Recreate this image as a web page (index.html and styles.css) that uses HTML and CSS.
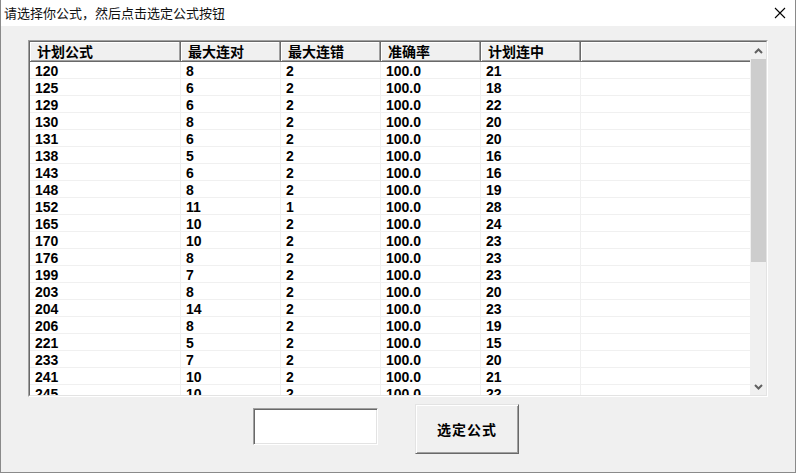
FILE: index.html
```html
<!DOCTYPE html>
<html>
<head>
<meta charset="utf-8">
<link rel="stylesheet" href="styles.css">
</head>
<body>
<div class="window">
  <div class="titlebar">
    <span class="title">请选择你公式，然后点击选定公式按钮</span>
    <span class="close"><svg width="12" height="12" viewBox="0 0 12 12"><path d="M1 1 L11 11 M11 1 L1 11" stroke="#000" stroke-width="1.1" fill="none"/></svg></span>
  </div>
  <div class="client">
    <div class="listbox">
      <div class="listinner">
        <div class="grid">
          <div class="header">
            <div class="hcell c1">计划公式</div>
            <div class="hcell c2">最大连对</div>
            <div class="hcell c2">最大连错</div>
            <div class="hcell c2">准确率</div>
            <div class="hcell c2">计划连中</div>
            <div class="hcell c6"></div>
          </div>
          <div class="rows">
            <div class="row"><div class="cell c1">120</div><div class="cell c2">8</div><div class="cell c2">2</div><div class="cell c2">100.0</div><div class="cell c2">21</div><div class="cell c6"></div></div>
            <div class="row"><div class="cell c1">125</div><div class="cell c2">6</div><div class="cell c2">2</div><div class="cell c2">100.0</div><div class="cell c2">18</div><div class="cell c6"></div></div>
            <div class="row"><div class="cell c1">129</div><div class="cell c2">6</div><div class="cell c2">2</div><div class="cell c2">100.0</div><div class="cell c2">22</div><div class="cell c6"></div></div>
            <div class="row"><div class="cell c1">130</div><div class="cell c2">8</div><div class="cell c2">2</div><div class="cell c2">100.0</div><div class="cell c2">20</div><div class="cell c6"></div></div>
            <div class="row"><div class="cell c1">131</div><div class="cell c2">6</div><div class="cell c2">2</div><div class="cell c2">100.0</div><div class="cell c2">20</div><div class="cell c6"></div></div>
            <div class="row"><div class="cell c1">138</div><div class="cell c2">5</div><div class="cell c2">2</div><div class="cell c2">100.0</div><div class="cell c2">16</div><div class="cell c6"></div></div>
            <div class="row"><div class="cell c1">143</div><div class="cell c2">6</div><div class="cell c2">2</div><div class="cell c2">100.0</div><div class="cell c2">16</div><div class="cell c6"></div></div>
            <div class="row"><div class="cell c1">148</div><div class="cell c2">8</div><div class="cell c2">2</div><div class="cell c2">100.0</div><div class="cell c2">19</div><div class="cell c6"></div></div>
            <div class="row"><div class="cell c1">152</div><div class="cell c2">11</div><div class="cell c2">1</div><div class="cell c2">100.0</div><div class="cell c2">28</div><div class="cell c6"></div></div>
            <div class="row"><div class="cell c1">165</div><div class="cell c2">10</div><div class="cell c2">2</div><div class="cell c2">100.0</div><div class="cell c2">24</div><div class="cell c6"></div></div>
            <div class="row"><div class="cell c1">170</div><div class="cell c2">10</div><div class="cell c2">2</div><div class="cell c2">100.0</div><div class="cell c2">23</div><div class="cell c6"></div></div>
            <div class="row"><div class="cell c1">176</div><div class="cell c2">8</div><div class="cell c2">2</div><div class="cell c2">100.0</div><div class="cell c2">23</div><div class="cell c6"></div></div>
            <div class="row"><div class="cell c1">199</div><div class="cell c2">7</div><div class="cell c2">2</div><div class="cell c2">100.0</div><div class="cell c2">23</div><div class="cell c6"></div></div>
            <div class="row"><div class="cell c1">203</div><div class="cell c2">8</div><div class="cell c2">2</div><div class="cell c2">100.0</div><div class="cell c2">20</div><div class="cell c6"></div></div>
            <div class="row"><div class="cell c1">204</div><div class="cell c2">14</div><div class="cell c2">2</div><div class="cell c2">100.0</div><div class="cell c2">23</div><div class="cell c6"></div></div>
            <div class="row"><div class="cell c1">206</div><div class="cell c2">8</div><div class="cell c2">2</div><div class="cell c2">100.0</div><div class="cell c2">19</div><div class="cell c6"></div></div>
            <div class="row"><div class="cell c1">221</div><div class="cell c2">5</div><div class="cell c2">2</div><div class="cell c2">100.0</div><div class="cell c2">15</div><div class="cell c6"></div></div>
            <div class="row"><div class="cell c1">233</div><div class="cell c2">7</div><div class="cell c2">2</div><div class="cell c2">100.0</div><div class="cell c2">20</div><div class="cell c6"></div></div>
            <div class="row"><div class="cell c1">241</div><div class="cell c2">10</div><div class="cell c2">2</div><div class="cell c2">100.0</div><div class="cell c2">21</div><div class="cell c6"></div></div>
            <div class="row"><div class="cell c1">245</div><div class="cell c2">10</div><div class="cell c2">2</div><div class="cell c2">100.0</div><div class="cell c2">22</div><div class="cell c6"></div></div>
          </div>
        </div>
        <div class="vscroll">
          <div class="sbtn"><svg width="9" height="6" viewBox="0 0 9 6"><path d="M1 5 L4.5 1.5 L8 5" stroke="#606060" stroke-width="2" fill="none"/></svg></div>
          <div class="track"><div class="thumb"></div></div>
          <div class="sbtn"><svg width="9" height="6" viewBox="0 0 9 6"><path d="M1 1 L4.5 4.5 L8 1" stroke="#606060" stroke-width="2" fill="none"/></svg></div>
        </div>
      </div>
    </div>
    <div class="actions">
      <div class="input"></div>
      <div class="btn">选定公式</div>
    </div>
  </div>
</div>
</body>
</html>
```
FILE: styles.css
```css
html, body {
  margin: 0;
  padding: 0;
  background: #f0f0f0;
}
.window {
  box-sizing: border-box;
  width: 796px;
  height: 473px;
  border-left: 1px solid #8a8a8a;
  border-right: 1px solid #8a8a8a;
  border-bottom: 1px solid #8a8a8a;
  background: #f0f0f0;
  display: flex;
  flex-direction: column;
  font-family: "Noto Sans CJK SC", sans-serif;
}
.titlebar {
  height: 26px;
  background: #fff;
  display: flex;
  align-items: center;
  justify-content: space-between;
  flex: none;
}
.title {
  font-size: 13px;
  color: #111;
  padding-left: 3px;
  line-height: 26px;
}
.close {
  width: 12px;
  height: 12px;
  margin-right: 9px;
  display: flex;
}
.client {
  padding-top: 14px;
  display: flex;
  flex-direction: column;
}
.listbox {
  margin-left: 27px;
  width: 740px;
  height: 357px;
  box-sizing: border-box;
  border: 1px solid;
  border-color: #a0a0a0 #fff #fff #a0a0a0;
}
.listinner {
  box-sizing: border-box;
  height: 100%;
  border: 1px solid;
  border-color: #696969 #e3e3e3 #e3e3e3 #696969;
  display: flex;
  overflow: hidden;
}
.grid {
  width: 720px;
  background: #fff;
  display: flex;
  flex-direction: column;
  overflow: hidden;
}
.header {
  height: 20px;
  display: flex;
  flex: none;
  background: #f0f0f0;
  box-sizing: border-box;
  border-bottom: 1px solid #696969;
  box-shadow: inset 0 -1px 0 #a0a0a0;
}
.hcell {
  box-sizing: border-box;
  height: 19px;
  border-right: 1px solid #696969;
  box-shadow: inset -1px 0 0 #a0a0a0, inset 1px 1px 0 #fff;
  padding-left: 7px;
  font-size: 14px;
  font-weight: bold;
  line-height: 19px;
  color: #000;
  white-space: nowrap;
}
.c1 { width: 151px; flex: none; }
.c2 { width: 100px; flex: none; }
.c6 { flex: 1; }
.hcell.c6 { border-right: none; box-shadow: inset 1px 1px 0 #fff; }
.rows {
  display: flex;
  flex-direction: column;
}
.row {
  display: flex;
  height: 17px;
  flex: none;
  box-sizing: border-box;
  border-bottom: 1px solid #f0f0f0;
}
.cell {
  box-sizing: border-box;
  height: 16px;
  border-right: 1px solid #f0f0f0;
  padding-left: 5px;
  padding-top: 1px;
  font-family: "Liberation Sans", Arial, sans-serif;
  font-size: 14px;
  font-weight: bold;
  line-height: 16px;
  color: #000;
}
.cell.c6 { border-right: none; }
.vscroll {
  width: 16px;
  flex: none;
  display: flex;
  flex-direction: column;
  background: #f0f0f0;
}
.sbtn {
  height: 17px;
  flex: none;
  display: flex;
  align-items: center;
  justify-content: center;
  padding-left: 1px;
}
.track {
  flex: 1;
  padding-left: 1px;
}
.thumb {
  height: 203px;
  background: #cdcdcd;
}
.actions {
  display: flex;
  align-items: flex-start;
  margin-top: 7px;
  padding-left: 252px;
}
.input {
  margin-top: 4px;
  width: 125px;
  height: 37px;
  box-sizing: border-box;
  background: #fff;
  border: 1px solid;
  border-color: #a0a0a0 #fff #fff #a0a0a0;
  box-shadow: inset 1px 1px 0 #696969, inset -1px -1px 0 #e3e3e3;
}
.btn {
  margin-left: 37px;
  width: 104px;
  height: 50px;
  box-sizing: border-box;
  background: #f0f0f0;
  border: 1px solid;
  border-color: #e3e3e3 #696969 #696969 #e3e3e3;
  box-shadow: inset 1px 1px 0 #fff, inset -1px -1px 0 #a0a0a0;
  display: flex;
  align-items: center;
  justify-content: center;
  font-size: 14px;
  font-weight: bold;
  color: #000;
  letter-spacing: 1px;
}
```
